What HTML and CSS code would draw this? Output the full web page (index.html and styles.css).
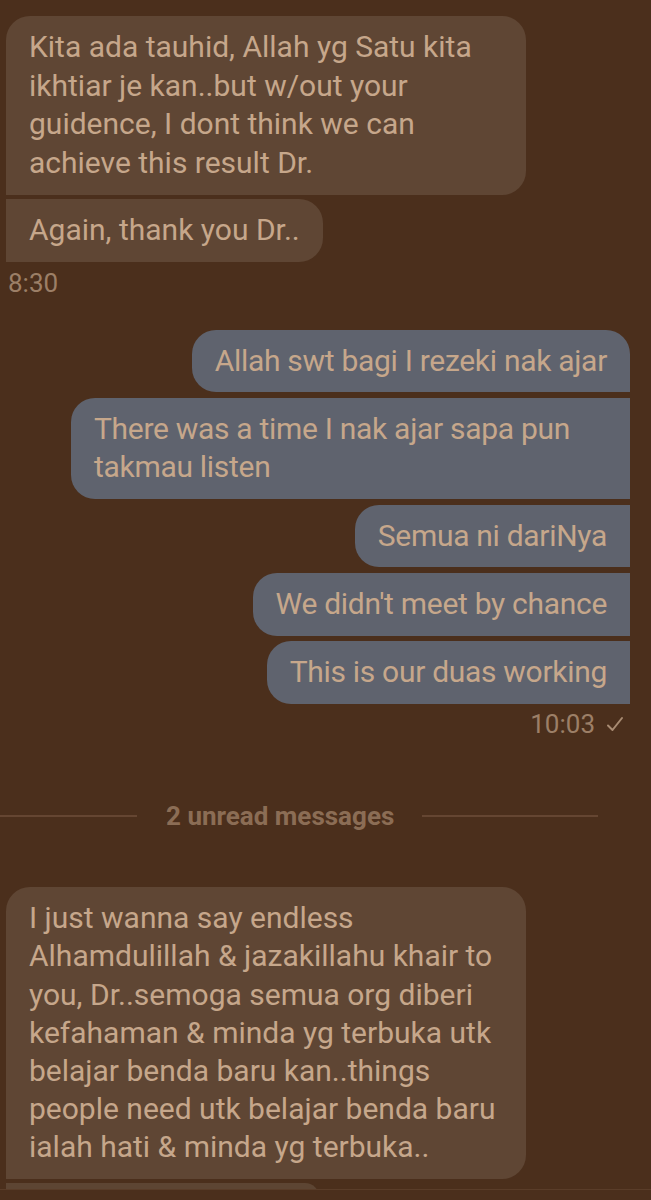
FILE: index.html
```html
<!DOCTYPE html>
<html lang="ms">
<head>
<meta charset="utf-8">
<title>Chat</title>
<link rel="stylesheet" href="styles.css">
</head>
<body>
<main class="chat">
  <section class="group in">
    <div class="bubble in first">Kita ada tauhid, Allah yg Satu kita ikhtiar je kan..but w/out your guidence, I dont think we can achieve this result Dr.</div>
    <div class="bubble in">Again, thank you Dr..</div>
    <div class="time in-time">8:30</div>
  </section>

  <section class="group out">
    <div class="bubble out first">Allah swt bagi I rezeki nak ajar</div>
    <div class="bubble out wide">There was a time I nak ajar sapa pun takmau listen</div>
    <div class="bubble out">Semua ni dariNya</div>
    <div class="bubble out">We didn't meet by chance</div>
    <div class="bubble out">This is our duas working</div>
    <div class="time out-time">10:03 <svg class="check" viewBox="0 0 20 20" width="20" height="20"><path d="M3 11.5 L7.5 16 L17 4" fill="none" stroke="currentColor" stroke-width="2" stroke-linecap="round" stroke-linejoin="round"/></svg></div>
  </section>

  <div class="divider"><span class="line"></span><span class="label">2 unread messages</span><span class="line right"></span></div>

  <section class="group in last">
    <div class="bubble in first">I just wanna say endless Alhamdulillah &amp; jazakillahu khair to you, Dr..semoga semua org diberi kefahaman &amp; minda yg terbuka utk belajar benda baru kan..things people need utk belajar benda baru ialah hati &amp; minda yg terbuka..</div>
    <div class="bubble in peek"></div>
  </section>
</main>
<div class="bottom-bar"></div>
</body>
</html>
```

FILE: styles.css
```css
html, body {
  margin: 0;
  padding: 0;
  background: #4b2f1c;
  height: 1200px;
  overflow: hidden;
}
body {
  font-family: Roboto, "Liberation Sans", sans-serif;
  color: #c6a78b;
  position: relative;
}
.chat {
  display: flex;
  flex-direction: column;
  padding: 16px 21px 0 6px;
}
.group {
  display: flex;
  flex-direction: column;
  gap: 4px;
}
.group.in { align-items: flex-start; }
.group.out { align-items: flex-end; margin-top: 32px; gap: 5.5px; }
.bubble {
  font-size: 30px;
  line-height: 38.7px;
  padding: 12px 23px;
  box-sizing: border-box;
}
.bubble.in {
  background: #5f4634;
  border-radius: 0 24px 24px 0;
  max-width: 520px;
}
.bubble.in.first { border-radius: 24px 24px 24px 0; width: 520px; }
.bubble.out {
  background: #5f636e;
  border-radius: 24px 0 0 24px;
  letter-spacing: -0.3px;
}
.bubble.out.first { border-radius: 24px 24px 0 24px; }
.bubble.out.wide { width: 559px; }
.time {
  font-size: 26px;
  line-height: 30px;
  color: #9c7f67;
}
.in-time { margin: 2px 0 0 2px; }
.out-time {
  margin: 0 5px 0 0;
  display: flex;
  align-items: center;
  gap: 10px;
}
.check { color: #a88b72; }
.divider {
  display: flex;
  align-items: center;
  margin: 60px 32px 0 -6px;
  height: 34px;
}
.divider .line {
  height: 2px;
  background: #654632;
  width: 137px;
}
.divider .line.right { width: auto; flex: 1; }
.divider .label {
  font-weight: bold;
  font-size: 26px;
  color: #8b6d55;
  padding: 0 28px 0 29px;
}
.group.last { margin-top: 54px; }
.group.last .bubble.in.first { line-height: 38.2px; }
.bubble.peek {
  width: 313px;
  height: 30px;
  border-radius: 0 14px 0 0;
  background: #5d4533;
}
.bottom-bar {
  position: absolute;
  left: 0;
  right: 0;
  top: 1189px;
  height: 11px;
  background: #4b2f1c;
  border-top: 1px solid #5a3d29;
}
```
